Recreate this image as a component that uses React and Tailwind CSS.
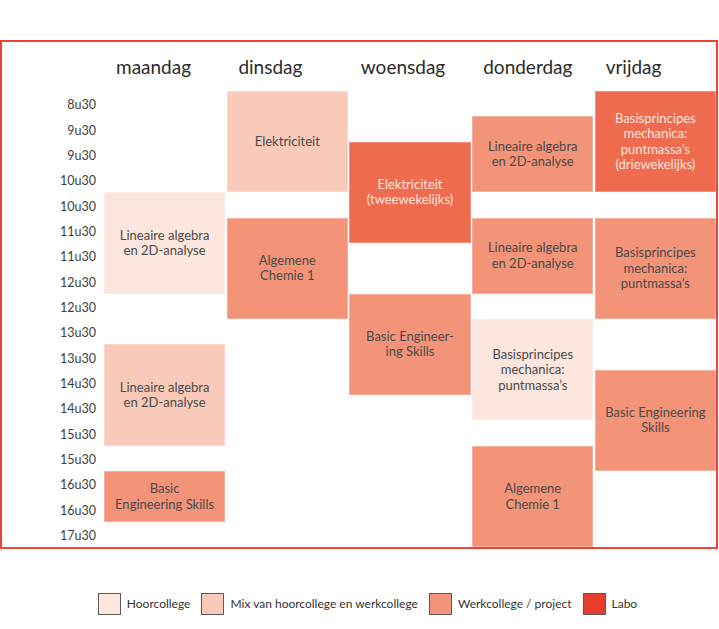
import React from "react";

const days = ["maandag", "dinsdag", "woensdag", "donderdag", "vrijdag"];

const times = [
  "8u30", "9u30", "9u30", "10u30", "10u30", "11u30", "11u30", "12u30", "12u30",
  "13u30", "13u30", "14u30", "14u30", "15u30", "15u30", "16u30", "16u30", "17u30",
];

const kinds = {
  hoor: "bg-[#fde6dd] text-[#4a4a4a]",
  mix: "bg-[#f9cab9] text-[#4a4a4a]",
  werk: "bg-[#f39478] text-[#4a4a4a]",
  dark: "bg-[#ee6b4f] text-[#fde6dd]",
};

// grid placement written out in full so Tailwind picks it up
const blocks = [
  { pos: "col-start-1 row-start-5 row-span-4", kind: "hoor", lines: ["Lineaire algebra", "en 2D-analyse"] },
  { pos: "col-start-1 row-start-11 row-span-4", kind: "mix", lines: ["Lineaire algebra", "en 2D-analyse"] },
  { pos: "col-start-1 row-start-16 row-span-2", kind: "werk", lines: ["Basic", "Engineering Skills"] },

  { pos: "col-start-2 row-start-1 row-span-4", kind: "mix", lines: ["Elektriciteit"] },
  { pos: "col-start-2 row-start-6 row-span-4", kind: "werk", lines: ["Algemene", "Chemie 1"] },

  { pos: "col-start-3 row-start-3 row-span-4", kind: "dark", lines: ["Elektriciteit", "(tweewekelijks)"] },
  { pos: "col-start-3 row-start-9 row-span-4", kind: "werk", lines: ["Basic Engineer-", "ing Skills"] },

  { pos: "col-start-4 row-start-2 row-span-3", kind: "werk", lines: ["Lineaire algebra", "en 2D-analyse"] },
  { pos: "col-start-4 row-start-6 row-span-3", kind: "werk", lines: ["Lineaire algebra", "en 2D-analyse"] },
  { pos: "col-start-4 row-start-10 row-span-4", kind: "hoor", lines: ["Basisprincipes", "mechanica:", "puntmassa’s"] },
  { pos: "col-start-4 row-start-15 row-span-4", kind: "werk", lines: ["Algemene", "Chemie 1"] },

  { pos: "col-start-5 row-start-1 row-span-4", kind: "dark", lines: ["Basisprincipes", "mechanica:", "puntmassa’s", "(driewekelijks)"] },
  { pos: "col-start-5 row-start-6 row-span-4", kind: "werk", lines: ["Basisprincipes", "mechanica:", "puntmassa’s"] },
  { pos: "col-start-5 row-start-12 row-span-4", kind: "werk", lines: ["Basic Engineering", "Skills"] },
];

const legend = [
  { label: "Hoorcollege", color: "bg-[#fde6dd]" },
  { label: "Mix van hoorcollege en werkcollege", color: "bg-[#f9cab9]" },
  { label: "Werkcollege / project", color: "bg-[#f39478]" },
  { label: "Labo", color: "bg-[#e63d2e]" },
];

const App = () => {
  return (
    <div className="w-[719px] h-[629px] bg-white font-['Lato','Open_Sans',sans-serif] overflow-hidden">
      {/* Timetable frame */}
      <div className="mt-[40px] w-[718px] border-2 border-[#ef4136]">
        {/* Day headers */}
        <div className="flex h-[49px] pl-[102px]">
          {days.map((d) => (
            <div key={d} className="w-[123px] pl-3 pt-[15px] text-[19px] text-[#2b2b2b] leading-none">
              {d}
            </div>
          ))}
        </div>

        <div className="flex">
          {/* Time labels */}
          <div className="w-[102px] grid grid-rows-[repeat(18,25.35px)] pr-[8px]">
            {times.map((t, i) => (
              <div key={i} className="flex items-center justify-end pt-[4px] text-[12.5px] text-[#3d3d3d]">
                {t}
              </div>
            ))}
          </div>

          {/* Course blocks */}
          <div className="flex-1 grid grid-cols-[repeat(5,1fr)] grid-rows-[repeat(18,25.35px)] gap-x-[1.5px]">
            {blocks.map((b, i) => (
              <div
                key={i}
                className={`${b.pos} ${kinds[b.kind]} flex flex-col items-center justify-center text-center text-[13px] leading-[15.5px] shadow-[inset_0_0_0_1px_rgba(255,255,255,0.25)]`}
              >
                {b.lines.map((l, j) => (
                  <span key={j}>{l}</span>
                ))}
              </div>
            ))}
          </div>
        </div>
      </div>

      {/* Legend */}
      <div className="flex items-center justify-center gap-[11px] mt-[44px] text-[12px] text-[#333] pl-[16px]">
        {legend.map((l) => (
          <div key={l.label} className="flex items-center gap-[6px]">
            <div className={`w-[23px] h-[22px] border border-[#5a5a5a] ${l.color}`} />
            <span>{l.label}</span>
          </div>
        ))}
      </div>
    </div>
  );
};

export default App;
